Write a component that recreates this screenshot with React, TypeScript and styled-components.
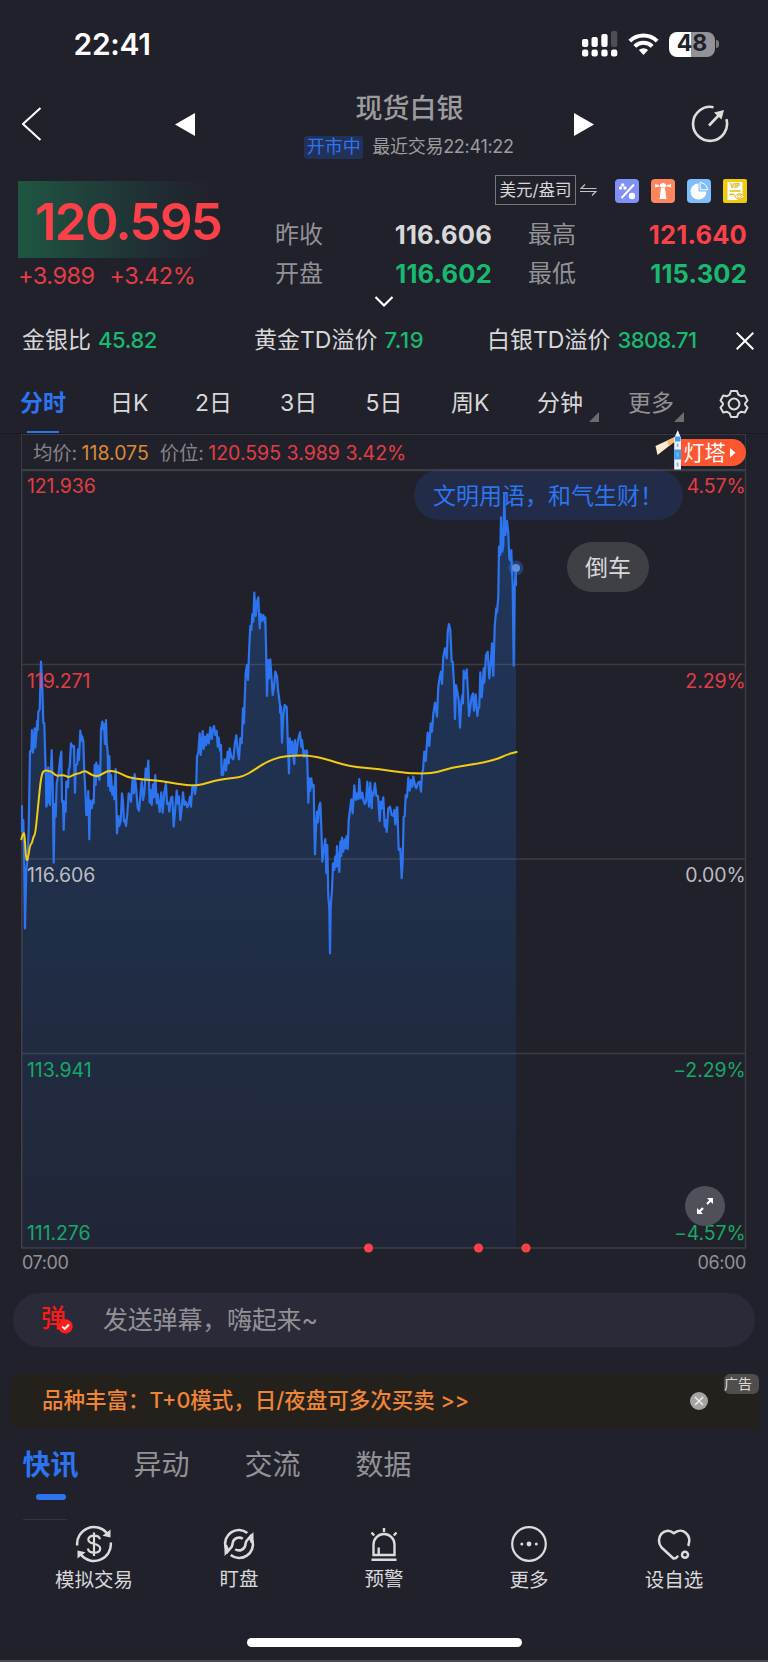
import React from 'react';
import styled, { createGlobalStyle } from 'styled-components';

const c = {
  bg: '#21212b',
  text: '#d8d8d9',
  gray: '#929195',
  dim: '#858488',
  red: '#fb4147',
  redSoft: '#e23d44',
  green: '#19b970',
  blue: '#2d75f0',
  amber: '#d98a35',
  grid: '#3a393f',
};

const Global = createGlobalStyle`
  * { box-sizing: border-box; }
  body { margin: 0; background: ${c.bg}; }
  #root { width: 768px; }
`;

const Screen = styled.main`
  display: flex;
  flex-direction: column;
  width: 768px;
  height: 1662px;
  overflow: hidden;
  background: ${c.bg};
  color: ${c.text};
  font-family: Inter, 'Noto Sans CJK SC', sans-serif;
  border-bottom: 2px solid #4c4c53;
`;

const Txt = styled.span<{ $size: number; $color?: string; $weight?: number; $track?: number }>`
  font-size: ${(p) => p.$size}px;
  line-height: 1.3;
  white-space: pre;
  color: ${(p) => p.$color || c.text};
  font-weight: ${(p) => p.$weight || 400};
  letter-spacing: ${(p) => p.$track || 0}px;
`;

/* ---------- status bar ---------- */
const StatusBar = styled.header`
  display: flex;
  align-items: center;
  justify-content: space-between;
  height: 88px;
  padding: 0 49px 0 73.5px;
`;
const StatusIcons = styled.div`
  display: flex;
  align-items: center;
  gap: 10px;
`;
const Battery = styled.div`
  display: flex;
  align-items: center;
  gap: 1px;
`;
const BatteryBody = styled.div`
  display: flex;
  align-items: center;
  justify-content: center;
  width: 46px;
  height: 25px;
  border-radius: 8px;
  background: linear-gradient(90deg, #fff 48%, #929297 48%);
`;
const BatteryCap = styled.i`
  width: 3px;
  height: 8px;
  border-radius: 0 4px 4px 0;
  background: #77777d;
`;

/* ---------- title bar ---------- */
const TitleBar = styled.nav`
  display: grid;
  grid-template-columns: 153px 93px 306px 117px 1fr;
  align-items: center;
  height: 77px;
  padding: 0 0 5px 22px;
`;
const TitleBlock = styled.div`
  display: flex;
  flex-direction: column;
  align-items: center;
  gap: 9px;
  width: 283px;
  margin-top: 2px;
`;
const TitleMeta = styled.div`
  display: flex;
  align-items: center;
  gap: 9px;
  margin-left: -1px;
`;
const OpenBadge = styled.span`
  display: flex;
  align-items: center;
  justify-content: center;
  width: 59px;
  height: 23px;
  border-radius: 3px;
  background: #223158;
`;
const ShareSlot = styled.div`
  display: flex;
`;

/* ---------- quote ---------- */
const Quote = styled.section`
  display: grid;
  grid-template-columns: 257px 1fr;
  height: 127px;
  padding: 0 23px 0 18px;
`;
const PriceColumn = styled.div`
  padding-top: 16px;
`;
const PriceFlash = styled.div`
  display: flex;
  align-items: center;
  height: 77px;
  padding: 5px 0 0 17px;
  background: linear-gradient(90deg, #1f5642 0%, #202f34 50%, rgba(33, 33, 43, 0) 76%);
`;
const Changes = styled.div`
  display: flex;
  gap: 15px;
  margin-top: 3px;
`;
const Details = styled.div`
  display: flex;
  flex-direction: column;
`;
const Tools = styled.div`
  display: flex;
  align-items: center;
  height: 30px;
  margin: 10px 0;
  padding-left: 220px;
`;
const UnitBox = styled.div`
  display: flex;
  align-items: center;
  justify-content: center;
  width: 81px;
  height: 30px;
  margin-right: 4px;
  padding-top: 2px;
  border: 1px solid #77767b;
`;
const ToolIcons = styled.div`
  display: flex;
  gap: 12px;
  margin: 2px 0 0 18px;
`;
const Stats = styled.div`
  display: grid;
  grid-template-columns: 60px 157px 36px 60px 1fr;
  grid-auto-rows: 39px;
  align-items: center;
`;
const StatValue = styled(Txt)`
  text-align: right;
`;
const ExpandRow = styled.div`
  display: flex;
  justify-content: center;
  height: 22px;
  padding-top: 3px;
`;

/* ---------- ratios ---------- */
const Ratios = styled.section`
  display: grid;
  grid-template-columns: 232px 233px 249px 1fr;
  align-items: center;
  height: 53px;
  padding-left: 22px;
`;
const Ratio = styled.div`
  display: flex;
  align-items: center;
  gap: 7px;
`;

/* ---------- period tabs ---------- */
const Periods = styled.nav`
  display: grid;
  grid-template-columns: 90px 85px 85px 85.5px 85.5px 86px 91px 91px 1fr;
  height: 67px;
  padding-left: 20px;
  border-bottom: 1px solid #1a1a23;
`;
const Period = styled.div<{ $active?: boolean }>`
  display: flex;
  align-items: center;
  gap: 6px;
  padding-top: 7px;
  background: ${(p) => (p.$active ? `linear-gradient(${c.blue}, ${c.blue}) 7px 100% / 32px 2px no-repeat` : 'none')};
`;
const Corner = styled.i<{ $tight?: boolean }>`
  width: 10px;
  height: 10px;
  margin: 27px 0 0 ${(p) => (p.$tight ? '-6px' : '0')};
  background: #6c6c6f;
  clip-path: polygon(100% 0, 100% 100%, 0 100%);
`;

/* ---------- chart ---------- */
const ChartPanel = styled.section`
  position: relative;
  width: 725px;
  margin-left: 21px;
`;
const ChartHead = styled.div`
  display: flex;
  align-items: center;
  gap: 11px;
  height: 36px;
  padding: 3px 0 0 11px;
  border: 1px solid ${c.grid};
`;
const HeadItem = styled.div`
  display: flex;
  align-items: center;
  gap: 4.5px;
`;
const Plot = styled.svg`
  display: block;
  overflow: visible;
`;
const TimeAxis = styled.div`
  display: flex;
  justify-content: space-between;
  height: 26px;
  padding: 2px 0 0 1px;
`;
const Beacon = styled.div`
  position: absolute;
  top: -4px;
  left: 633px;
  display: flex;
  align-items: center;
`;
const Bubble = styled.div<{ $x: number; $y: number; $w: number; $bg: string }>`
  position: absolute;
  left: ${(p) => p.$x}px;
  top: ${(p) => p.$y}px;
  display: flex;
  align-items: center;
  justify-content: center;
  width: ${(p) => p.$w}px;
  height: 50px;
  padding-top: 3px;
  border-radius: 25px;
  background: ${(p) => p.$bg};
`;
const FullscreenButton = styled.button`
  position: absolute;
  left: 664px;
  top: 752px;
  display: flex;
  align-items: center;
  justify-content: center;
  width: 40px;
  height: 40px;
  padding: 0;
  border: 0;
  border-radius: 50%;
  background: #50505a;
`;

/* ---------- lower part ---------- */
const BarrageBar = styled.section`
  display: flex;
  align-items: center;
  height: 54px;
  margin: 18px 13px 0;
  padding-left: 28px;
  border-radius: 27px;
  background: #2b2a38;
`;
const BarrageIcon = styled.span`
  position: relative;
  width: 62px;
  height: 33px;
  margin-top: -3px;
`;
const CheckBadge = styled.svg`
  position: absolute;
  left: 17px;
  top: 17px;
`;
const Ad = styled.section`
  position: relative;
  display: flex;
  align-items: center;
  justify-content: space-between;
  height: 54px;
  margin: 27px 9px 0 10px;
  padding: 0 51px 0 32px;
  border-radius: 6px;
  background: #24211d;
`;
const AdTag = styled.span`
  position: absolute;
  right: 0;
  top: 0;
  display: flex;
  align-items: center;
  width: 35px;
  height: 20px;
  border-radius: 6px;
  background: #504e4c;
`;
const FeedTabs = styled.nav`
  display: flex;
  gap: 55px;
  height: 92px;
  padding: 19px 0 0 22.5px;
`;
const FeedTab = styled.div<{ $active?: boolean }>`
  display: flex;
  flex-direction: column;
  align-items: center;
  &::after {
    content: '';
    width: 30px;
    height: 6px;
    margin-top: 11px;
    border-radius: 3px;
    background: ${(p) => (p.$active ? c.blue : 'transparent')};
  }
`;
const FeedStub = styled.hr`
  width: 44px;
  height: 1px;
  margin: -1px 0 0 23px;
  border: 0;
  background: #34343f;
`;
const BottomBar = styled.footer`
  display: grid;
  grid-template-columns: repeat(5, 145px);
  justify-content: center;
  padding-top: 5px;
`;
const Action = styled.div<{ $lift?: boolean }>`
  display: flex;
  flex-direction: column;
  align-items: center;
  gap: ${(p) => (p.$lift ? 4 : 5)}px;
`;
const HomeIndicator = styled.div`
  width: 275px;
  height: 9px;
  margin: auto auto 13px 247px;
  border-radius: 5px;
  background: #fff;
`;

/* ---------- series ---------- */
type Segment = { x: number; y: number; data: string };

const priceSegments: Segment[] = [
  {
    x: 0, y: 500,
    data: '66,918 66,995 70,960 72,1040 75,1285 79,1110 83,1075 86,985 90,755 94,750 96,690 98,758 101,740 104,685 106,742 110,688 112,662 113,690 115,635 119,628 121,560 123,485 127,560 130,668 133,670 136,780 138,830 139,920 143,905 145,802 147,890 150,915 152,830 155,750 158,860 161,1088 164,912 167,950 170,850 176,820 180,780 184,755 186,905 189,903 191,990 194,905 197,935 199,845 204,862 206,810 209,800 213,730 216,738 220,742 222,738 225,878 227,797 232,792 234,748 237,780 241,692 245,722 246,708 250,722 253,820 256,868 259,945 262,945 265,873 268,1018 270,902 275,925 278,900 281,910 284,795 287,855 289,788 292,830 294,797 298,840 301,820 303,690 307,665 310,688 312,672 315,732 318,660 320,732 323,755 325,858 328,768 331,872 333,825 337,884 341,860 343,898 347,807 349,905 351,1000 355,948 358,978 362,962 366,880 369,905 372,965 375,960 378,978 382,943 386,880 390,890 393,905 398,833 402,880 404,822 409,870 413,925 417,932 420,900 425,843 429,900 433,880 437,806 440,835 445,782 449,908 452,870 455,915 459,853 462,892 466,825 470,910 473,882 479,936 484,877 488,938 493,878 498,850 501,912 505,908 508,935 513,893 517,890 521,980 525,935 530,872 534,912 537,890 541,960 545,925 549,877 553,915 557,905 562,922 567,908 570,890 573,920 577,862 581,855 585,882 589,855 591,770 595,758 599,700 602,765 608,693 611,747 615,710 618,735 622,703 626,730 631,682 635,717 638,692 642,678 646,705 650,693 653,740 656,713 660,752 663,735 665,825 669,825 674,778 678,812 683,755 686,790 689,745 694,772 700,778 704,735 709,706 714,760 717,778 721,715 725,730 727,682 729,625 732,670 734,600 737,520 741,495 744,540 748,440 751,378 754,390 757,343 760,365 763,278 767,348 771,305 775,292 779,385 782,342 786,362 790,345 795,370',
  },
  {
    x: 180, y: 560,
    data: '256,172 258,260 261,408 264,300 267,355 271,298 274,345 278,405 282,380 286,335 291,350 294,390 300,435 300,458 303,440 306,548 310,465 314,435 320,442 323,540 327,640 329,535 334,580 337,545 340,590 343,612 345,540 349,585 354,540 360,517 364,560 366,540 371,590 374,572 378,590 381,572 383,650 385,728 388,655 391,692 394,655 397,680 401,675 403,800 405,883 408,800 411,755 414,787 417,740 421,728 424,800 427,905 431,870 436,837 439,940 442,855 445,1010 448,1045 450,1180 452,1040 456,990 459,910 463,930 466,890 469,920 471,858 475,910 478,936 481,845 484,888 486,833 490,875 494,838 497,865 500,828 503,867 506,780 514,718 518,760 523,676 527,720 531,700 535,717 538,657 542,715 547,698 550,718 554,732 558,725 562,665 567,740 571,668 575,745 577,697 580,707 585,670 589,707 594,708 599,783 602,725 605,745 610,712 614,800 617,780 620,816 625,745 630,740 635,765 641,768 643,750 646,793 650,742 652,742 656,870 661,866 665,955 668,900 671,770 674,768 677,705 681,712 685,653 689,692 693,660 697,680 700,650 705,675 709,685 714,668 719,665 723,695 726,640 729,630 733,575 737,603 743,518 748,558 752,490 756,515 760,462 765,428 771,470 775,380 779,352 783,335 786,372 790,290 795,265 800,295 803,215',
  },
  {
    x: 380, y: 460,
    data: '207,492 211,510 215,605 218,605 222,670 225,777 228,675 232,695 236,720 240,803 243,740 247,705 249,730 251,632 256,655 260,628 264,700 267,768 271,740 275,710 279,700 282,752 287,703 292,768 295,745 298,742 301,637 305,712 307,690 311,625 313,668 318,585 323,575 328,655 333,600 336,550 340,648 344,500 349,445 351,457 355,410 357,260 361,285 363,172 367,275 370,255 373,100 376,225 381,183 385,220 388,295 391,302 394,270 398,380 401,617 404,380 407,325 408,375',
  },
];

const averageSegments: Segment[] = [
  {
    x: 0, y: 500,
    data: '64,1018 70,996 74,1005 78,1078 83,1082 90,1035 96,1030 100,1010 106,1003 114,920 124,822 134,810 145,813 155,814 165,825 175,828 190,824 207,833 222,823 240,820 254,811 270,822 285,829 300,827 322,812 345,814 365,822 387,833 435,839 480,842 530,852 590,858 625,848 660,838 700,834 730,829 760,812',
  },
  { x: 180, y: 560, data: '260,605 300,591 340,587 385,586 435,596 505,619 600,628 680,639 735,641 770,637' },
  { x: 380, y: 460, data: '215,923 280,913 345,900 385,882 410,876' },
];

/* The plot's own origin on the screen; segment samples are stored in thirds of a pixel. */
const OX = 21;
const OY = 470;
const toPoints = (segments: Segment[]): number[][] =>
  segments.flatMap((s) =>
    s.data.split(' ').map((pair) => {
      const [x, y] = pair.split(',').map(Number);
      return [s.x + x / 3 - OX, s.y + y / 3 - OY];
    }),
  );
const linePath = (pts: number[][]) => 'M' + pts.map((p) => p.map((v) => v.toFixed(1)).join(' ')).join('L');
const smoothPath = (pts: number[][]) => {
  let d = `M${pts[0][0]} ${pts[0][1]}`;
  for (let i = 1; i < pts.length - 1; i++) {
    const [x, y] = pts[i];
    d += `Q${x} ${y} ${(x + pts[i + 1][0]) / 2} ${(y + pts[i + 1][1]) / 2}`;
  }
  const last = pts[pts.length - 1];
  return d + `L${last[0]} ${last[1]}`;
};
const pricePath = linePath(toPoints(priceSegments));
const averagePath = smoothPath(toPoints(averageSegments));

const levels = [
  { y: 16, left: '121.936', right: '4.57%', color: c.redSoft },
  { y: 210.5, left: '119.271', right: '2.29%', color: c.redSoft },
  { y: 405, left: '116.606', right: '0.00%', color: '#bdbcc0' },
  { y: 599.5, left: '113.941', right: '−2.29%', color: '#17a867' },
  { y: 762.5, left: '111.276', right: '−4.57%', color: '#17a867' },
];

const Chart = () => (
  <Plot width="725" height="779" viewBox="0 0 725 779">
    <defs>
      <linearGradient id="area" x1="0" y1="0" x2="0" y2="778" gradientUnits="userSpaceOnUse">
        <stop offset="0" stopColor="#1c78ee" stopOpacity="0.27" />
        <stop offset="1" stopColor="#1c78ee" stopOpacity="0.06" />
      </linearGradient>
    </defs>
    <path d={`${pricePath}L495 778L0.5 778Z`} fill="url(#area)" />
    <g stroke="#8a8580" strokeOpacity="0.27" strokeWidth="1.5">
      <path d="M0 .5H725M0 194.5H725M0 389H725M0 583.5H725M0 778H725M.75 0V778M724.5 0V778" />
    </g>
    <path d={pricePath} fill="none" stroke={c.blue} strokeWidth="2.2" strokeLinejoin="round" strokeLinecap="round" />
    <path d={averagePath} fill="none" stroke="#f2cb13" strokeWidth="2" strokeLinecap="round" />
    <circle cx="495" cy="98" r="7.5" fill={c.blue} fillOpacity="0.35" />
    <circle cx="495" cy="98" r="4" fill="#5e8edb" />
    {levels.map((l) => (
      <g key={l.left} fill={l.color} fontSize="19.5" letterSpacing="-0.1">
        <text x="6" y={l.y + 7}>{l.left}</text>
        <text x="724.5" y={l.y + 7} textAnchor="end">{l.right}</text>
      </g>
    ))}
    {[347.5, 457.5, 505].map((x) => (
      <circle key={x} cx={x} cy="778" r="4.6" fill={c.red} />
    ))}
  </Plot>
);

/* ---------- icons ---------- */
const Signal = () => (
  <svg width="36" height="26" viewBox="0 0 36 26" fill="#fff">
    <rect x="0" y="8" width="6.3" height="8" rx="2" />
    <rect x="9.5" y="6" width="6.3" height="10" rx="2" />
    <rect x="19.3" y="3" width="6.3" height="13" rx="2" />
    <rect x="29" y="0" width="6.3" height="16" rx="2" fill="#4e4e57" />
    {[0, 9.5, 19.3, 29].map((x) => (
      <rect key={x} x={x} y="18.5" width="6.3" height="7" rx="2.2" />
    ))}
  </svg>
);
const Wifi = () => (
  <svg width="31" height="24" viewBox="0 0 31 24" fill="none" stroke="#fff" strokeWidth="4">
    <path d="M1.8 9.2a19.4 19.4 0 0 1 27.4 0" />
    <path d="M6.8 14.4a12.3 12.3 0 0 1 17.4 0" />
    <path d="M15.500 23l-4.600-4.900a6.600 6.600 0 0 1 9.200 0Z" fill="#fff" stroke="none" />
  </svg>
);
const Back = () => (
  <svg width="20" height="34" viewBox="0 0 20 34" fill="none" stroke="#fff" strokeWidth="2">
    <path d="M18.500 1L1 17L18.500 33" />
  </svg>
);
const Triangle = ({ flip }: { flip?: boolean }) => (
  <svg width="20" height="23" viewBox="0 0 20 23" fill="#fff">
    <path d={flip ? 'M0 0L20 11.500L0 23Z' : 'M20 0L0 11.500L20 23Z'} />
  </svg>
);
const Share = () => (
  <svg width="38" height="38" viewBox="0 0 38 38" fill="none" stroke="#dededb" strokeWidth="2.6">
    <path d="M22.500 2.200A17 17 0 1 0 35.400 14.200" />
    <path d="M18 20.500L28.500 9.500" />
    <path d="M23 7.500L33 5L30.500 14.500Z" fill="#dededb" stroke="none" />
  </svg>
);
const Swap = () => (
  <svg width="17" height="12" viewBox="0 0 17 12" fill="none" stroke="#c6c6c7" strokeWidth="1.2">
    <path d="M5 .5L1 4.500H16.500M0 7.500H16L12 11.500" />
  </svg>
);
const ToolIcon = ({ kind }: { kind: string }) => (
  <svg width="24" height="24" viewBox="0 0 24 24" fill="#fff">
    {kind === 'ratio' && (
      <>
        <rect width="24" height="24" rx="4" fill="#8090f8" />
        <path d="M19 5.500L6.500 19" stroke="#fff" strokeWidth="2" />
        <circle cx="7.700" cy="6" r="1.700" />
        <circle cx="5.500" cy="9" r="1.700" />
        <circle cx="10" cy="9" r="1.700" />
        <circle cx="17" cy="17" r="3.200" />
      </>
    )}
    {kind === 'tower' && (
      <>
        <rect width="24" height="24" rx="4" fill="#fd865e" />
        <path d="M10 8.500h4l1.400 11.500H8.600zM9 5.500L12 3.500L15 5.500V8H9zM4 5l4.500 1.200v1L4 8.500zM20 5l-4.500 1.200v1L20 8.500z" />
      </>
    )}
    {kind === 'pie' && (
      <>
        <rect width="24" height="24" rx="4" fill="#80bdfb" />
        <path d="M11.500 4.500A8 8 0 1 0 19.500 12.500H11.500Z" />
        <path d="M13.200 3.500A7.500 7.500 0 0 1 20.500 10.800H13.200Z" fill="none" stroke="#fff" />
      </>
    )}
    {kind === 'vip' && (
      <>
        <rect width="24" height="24" rx="2" fill="#f2cc0c" />
        <path d="M4.500 3h15v12l-5 6h-10z" />
        <text x="12" y="9" textAnchor="middle" fontSize="6" fontWeight="800" fill="#dcb400">VIP</text>
        <path d="M6.500 12h11M6.500 15.500h5" stroke="#e0b90a" strokeWidth="1.400" />
        <path d="M11.500 17.500q5-5.500 10 0q-5 5.500-10 0Z" stroke="#e0b90a" />
        <circle cx="16.500" cy="17.500" r="1.700" fill="none" stroke="#e0b90a" />
      </>
    )}
  </svg>
);
const Gear = () => (
  <svg width="30" height="30" viewBox="0 0 30 30" fill="none" stroke="#dcdcdc" strokeWidth="2" strokeLinejoin="round">
    <path d="M12 2h6l1.300 3.700 2.700 1.500 3.800-.8 2.700 5-2.400 2.900v1.400l2.400 2.900-2.700 5-3.800-.8-2.700 1.500L18 28h-6l-1.300-3.700L8 22.800l-3.800.8-2.700-5 2.400-2.900v-1.400l-2.400-2.900 2.700-5L8 7.200l2.700-1.500Z" />
    <circle cx="15" cy="15" r="5.400" />
  </svg>
);
const BeaconArt = () => (
  <svg width="92" height="42" viewBox="0 0 92 42">
    <path d="M22 9H78.500A13.500 13.500 0 0 1 78.500 36H22Z" fill="#fd5630" />
    <path d="M23 6L1.500 16L3.500 25L24 9Z" fill="#fdebd0" />
    <path d="M23 6L13 10.700L15 16L24 9Z" fill="#f9b968" />
    <path d="M23.800 0L27 8V39.500H20.200V8Z" fill="#eef3fb" />
    <path d="M21 6.500h5.500v5h-5.500zM20.200 19.500h6.800v10h-6.800z" fill="#3f9cf0" />
    <path d="M23.600 13.500v3.500M23.600 22.500v4M23.600 32.500v4" stroke="#7eb9ee" strokeWidth="1.800" />
    <text x="29.500" y="29.800" fontSize="21" fill="#fff">灯塔</text>
    <path d="M76 18L81.500 22.700L76 27.500Z" fill="#fff" />
  </svg>
);
const Trade = () => (
  <svg width="38" height="38" viewBox="0 0 38 38" fill="none" stroke="#dcdcdc" strokeWidth="2.500">
    <path d="M2.200 20.500A16.800 16.800 0 0 1 32 8.300M35.800 17.500A16.800 16.800 0 0 1 6 29.700" />
    <path d="M35.500 4.500V12.500L27.500 10.800ZM2.500 33.500V25.500L10.500 27.200Z" fill="#dcdcdc" stroke="none" />
    <path d="M25 14.200C24.300 11.500 21.900 10.700 19 10.700C15.700 10.700 13.300 12.200 13.300 14.700C13.300 20 25.200 17.600 25.200 23.500C25.200 26.200 22.500 27.700 19.200 27.700C15.700 27.700 13.300 26.300 12.900 23.500M19 7.500V31" strokeWidth="2.200" />
  </svg>
);
const WatchHalf = () => (
  <>
    <path d="M27.300 8A13.700 13.700 0 0 0 5.600 22.500" />
    <path d="M6 28.500L11.500 22C12.500 20.500 12.300 19.500 12.700 17.800A6.500 6.500 0 0 1 22.800 13.800" />
    <path d="M4.300 20L4.600 31L9.500 25.500L7.200 20Z" fill="#dcdcdc" stroke="none" />
  </>
);
const Watch = () => (
  <svg width="38" height="38" viewBox="0 0 38 38" fill="none" stroke="#dcdcdc" strokeWidth="2.600">
    <WatchHalf />
    <g transform="rotate(180 19 19)"><WatchHalf /></g>
  </svg>
);
const Alarm = () => (
  <svg width="38" height="38" viewBox="0 0 38 38" fill="none" stroke="#dcdcdc" strokeWidth="2.400">
    <path d="M8.500 30V19.500a10.500 10.500 0 0 1 21 0V30ZM13.700 30V22.500M19 3V7M6.500 7.500L9.200 10.500M31.500 7.500L28.800 10.500M6.500 34.800H31.500" />
  </svg>
);
const More = () => (
  <svg width="38" height="38" viewBox="0 0 38 38" fill="#dcdcdc">
    <circle cx="19" cy="19" r="16.800" fill="none" stroke="#dcdcdc" strokeWidth="2.200" />
    <circle cx="11.800" cy="19" r="1.500" />
    <circle cx="19" cy="19" r="2.400" />
    <circle cx="26.300" cy="19" r="1.500" />
  </svg>
);
const Favorite = () => (
  <svg width="38" height="38" viewBox="0 0 38 38" fill="none" stroke="#dcdcdc" strokeWidth="2.500" strokeLinecap="round" strokeLinejoin="round">
    <path d="M22.500 31.500Q20.500 34 18.500 33.500L6.500 22.500C-1 13 9.500 .5 18.800 8.300C27.500 .8 36.800 10.500 33.500 20" />
    <circle cx="30" cy="29.700" r="3" />
  </svg>
);

export default function App() {
  return (
    <Screen>
      <Global />
      <StatusBar>
        <Txt $size={30} $color="#fff" $weight={600} $track={-0.3}>22:41</Txt>
        <StatusIcons>
          <Signal />
          <Wifi />
          <Battery>
            <BatteryBody><Txt $size={23} $weight={700} $color={c.bg}>48</Txt></BatteryBody>
            <BatteryCap />
          </Battery>
        </StatusIcons>
      </StatusBar>

      <TitleBar>
        <Back />
        <Triangle />
        <TitleBlock>
          <Txt $size={27} $weight={500} $color="#9c9b9d">现货白银</Txt>
          <TitleMeta>
            <OpenBadge><Txt $size={18} $color={c.blue}>开市中</Txt></OpenBadge>
            <Txt $size={18} $color="#9c9b9d" $track={-0.3}>最近交易22:41:22</Txt>
          </TitleMeta>
        </TitleBlock>
        <Triangle flip />
        <ShareSlot><Share /></ShareSlot>
      </TitleBar>

      <Quote>
        <PriceColumn>
          <PriceFlash><Txt $size={51} $weight={600} $color={c.red} $track={-1.7}>120.595</Txt></PriceFlash>
          <Changes>
            <Txt $size={23.500} $color={c.redSoft} $track={-0.5}>+3.989</Txt>
            <Txt $size={23.500} $color={c.redSoft} $track={-0.5}>+3.42%</Txt>
          </Changes>
        </PriceColumn>
        <Details>
          <Tools>
            <UnitBox><Txt $size={16.500}>美元/盎司</Txt></UnitBox>
            <Swap />
            <ToolIcons>
              <ToolIcon kind="ratio" />
              <ToolIcon kind="tower" />
              <ToolIcon kind="pie" />
              <ToolIcon kind="vip" />
            </ToolIcons>
          </Tools>
          <Stats>
            <Txt $size={24} $color={c.gray}>昨收</Txt>
            <StatValue $size={25.500} $weight={700} $track={0.2}>116.606</StatValue>
            <span />
            <Txt $size={24} $color={c.gray}>最高</Txt>
            <StatValue $size={25.500} $weight={700} $track={0.2} $color={c.red}>121.640</StatValue>
            <Txt $size={24} $color={c.gray}>开盘</Txt>
            <StatValue $size={25.500} $weight={700} $track={0.2} $color={c.green}>116.602</StatValue>
            <span />
            <Txt $size={24} $color={c.gray}>最低</Txt>
            <StatValue $size={25.500} $weight={700} $track={0.2} $color={c.green}>115.302</StatValue>
          </Stats>
        </Details>
      </Quote>
      <ExpandRow>
        <svg width="20" height="14" viewBox="0 0 20 14" fill="none" stroke="#fff" strokeWidth="2.200">
          <path d="M1.500 2L10 10.500L18.500 2" />
        </svg>
      </ExpandRow>

      <Ratios>
        <Ratio><Txt $size={23}>金银比</Txt><Txt $size={22} $weight={500} $color={c.green} $track={-0.4}>45.82</Txt></Ratio>
        <Ratio><Txt $size={23}>黄金TD溢价</Txt><Txt $size={22} $weight={500} $color={c.green} $track={0.5}>7.19</Txt></Ratio>
        <Ratio><Txt $size={23}>白银TD溢价</Txt><Txt $size={22} $weight={500} $color={c.green} $track={-0.6}>3808.71</Txt></Ratio>
        <svg width="18" height="18" viewBox="0 0 18 18" stroke="#fff" strokeWidth="2">
          <path d="M.7 .7L17.300 17.300M17.300 .7L.7 17.300" />
        </svg>
      </Ratios>

      <Periods>
        <Period $active><Txt $size={23} $weight={700} $color={c.blue}>分时</Txt></Period>
        <Period><Txt $size={23}>日K</Txt></Period>
        <Period><Txt $size={23}>2日</Txt></Period>
        <Period><Txt $size={23}>3日</Txt></Period>
        <Period><Txt $size={23}>5日</Txt></Period>
        <Period><Txt $size={23}>周K</Txt></Period>
        <Period><Txt $size={23}>分钟</Txt><Corner /></Period>
        <Period><Txt $size={23} $color={c.gray}>更多</Txt><Corner $tight /></Period>
        <Period><Gear /></Period>
      </Periods>

      <ChartPanel>
        <ChartHead>
          <HeadItem>
            <Txt $size={19.500} $color={c.dim} $track={-0.2}>均价:</Txt>
            <Txt $size={19.500} $color={c.amber}>118.075</Txt>
          </HeadItem>
          <HeadItem>
            <Txt $size={19.500} $color={c.dim} $track={-0.2}>价位:</Txt>
            <Txt $size={19.500} $color={c.redSoft}>120.595 3.989 3.42%</Txt>
          </HeadItem>
        </ChartHead>
        <Chart />
        <TimeAxis>
          <Txt $size={18} $color={c.gray} $track={-0.4}>07:00</Txt>
          <Txt $size={18} $color={c.gray} $track={-0.4}>06:00</Txt>
        </TimeAxis>
        <Beacon><BeaconArt /></Beacon>
        <Bubble $x={392.500} $y={36} $w={269} $bg="rgba(43, 105, 225, 0.16)">
          <Txt $size={23} $color={c.blue}>文明用语，和气生财！</Txt>
        </Bubble>
        <Bubble $x={546} $y={108} $w={82} $bg="#3f3f46"><Txt $size={23}>倒车</Txt></Bubble>
        <FullscreenButton>
          <svg width="18" height="18" viewBox="0 0 18 18" stroke="#fff" strokeWidth="2.200" fill="#fff">
            <path d="M2 16L7 11M11 7L16 2" />
            <path d="M1 11L1 17L7 17ZM11 1L17 1L17 7Z" stroke="none" />
          </svg>
        </FullscreenButton>
      </ChartPanel>

      <BarrageBar>
        <BarrageIcon>
          <Txt $size={25} $weight={500} $color="#fb1a16">弹</Txt>
          <CheckBadge width="15" height="15" viewBox="0 0 15 15" fill="none">
            <circle cx="7.500" cy="7.500" r="7.200" fill="#fb1f1d" />
            <path d="M4.200 7.600L6.700 10L11 5.500" stroke="#fff" strokeWidth="1.900" />
          </CheckBadge>
        </BarrageIcon>
        <Txt $size={25} $color={c.gray} $track={-0.2}>发送弹幕，嗨起来~</Txt>
      </BarrageBar>

      <Ad>
        <Txt $size={21.500} $weight={500} $color="#ee8537">{'品种丰富：T+0模式，日/夜盘可多次买卖 >>'}</Txt>
        <svg width="18" height="18" viewBox="0 0 18 18" stroke="#24211d" strokeWidth="1.500">
          <circle cx="9" cy="9" r="9" fill="#a5a4a2" stroke="none" />
          <path d="M5 5L13 13M13 5L5 13" stroke="#eee" />
        </svg>
        <AdTag><Txt $size={14}>广告</Txt></AdTag>
      </Ad>

      <FeedTabs>
        <FeedTab $active><Txt $size={28} $weight={700} $color={c.blue}>快讯</Txt></FeedTab>
        <FeedTab><Txt $size={28} $color={c.gray}>异动</Txt></FeedTab>
        <FeedTab><Txt $size={28} $color={c.gray}>交流</Txt></FeedTab>
        <FeedTab><Txt $size={28} $color={c.gray}>数据</Txt></FeedTab>
      </FeedTabs>
      <FeedStub />

      <BottomBar>
        <Action><Trade /><Txt $size={19.500}>模拟交易</Txt></Action>
        <Action $lift><Watch /><Txt $size={19.500}>盯盘</Txt></Action>
        <Action $lift><Alarm /><Txt $size={19.500}>预警</Txt></Action>
        <Action><More /><Txt $size={19.500}>更多</Txt></Action>
        <Action><Favorite /><Txt $size={19.500}>设自选</Txt></Action>
      </BottomBar>
      <HomeIndicator />
    </Screen>
  );
}
